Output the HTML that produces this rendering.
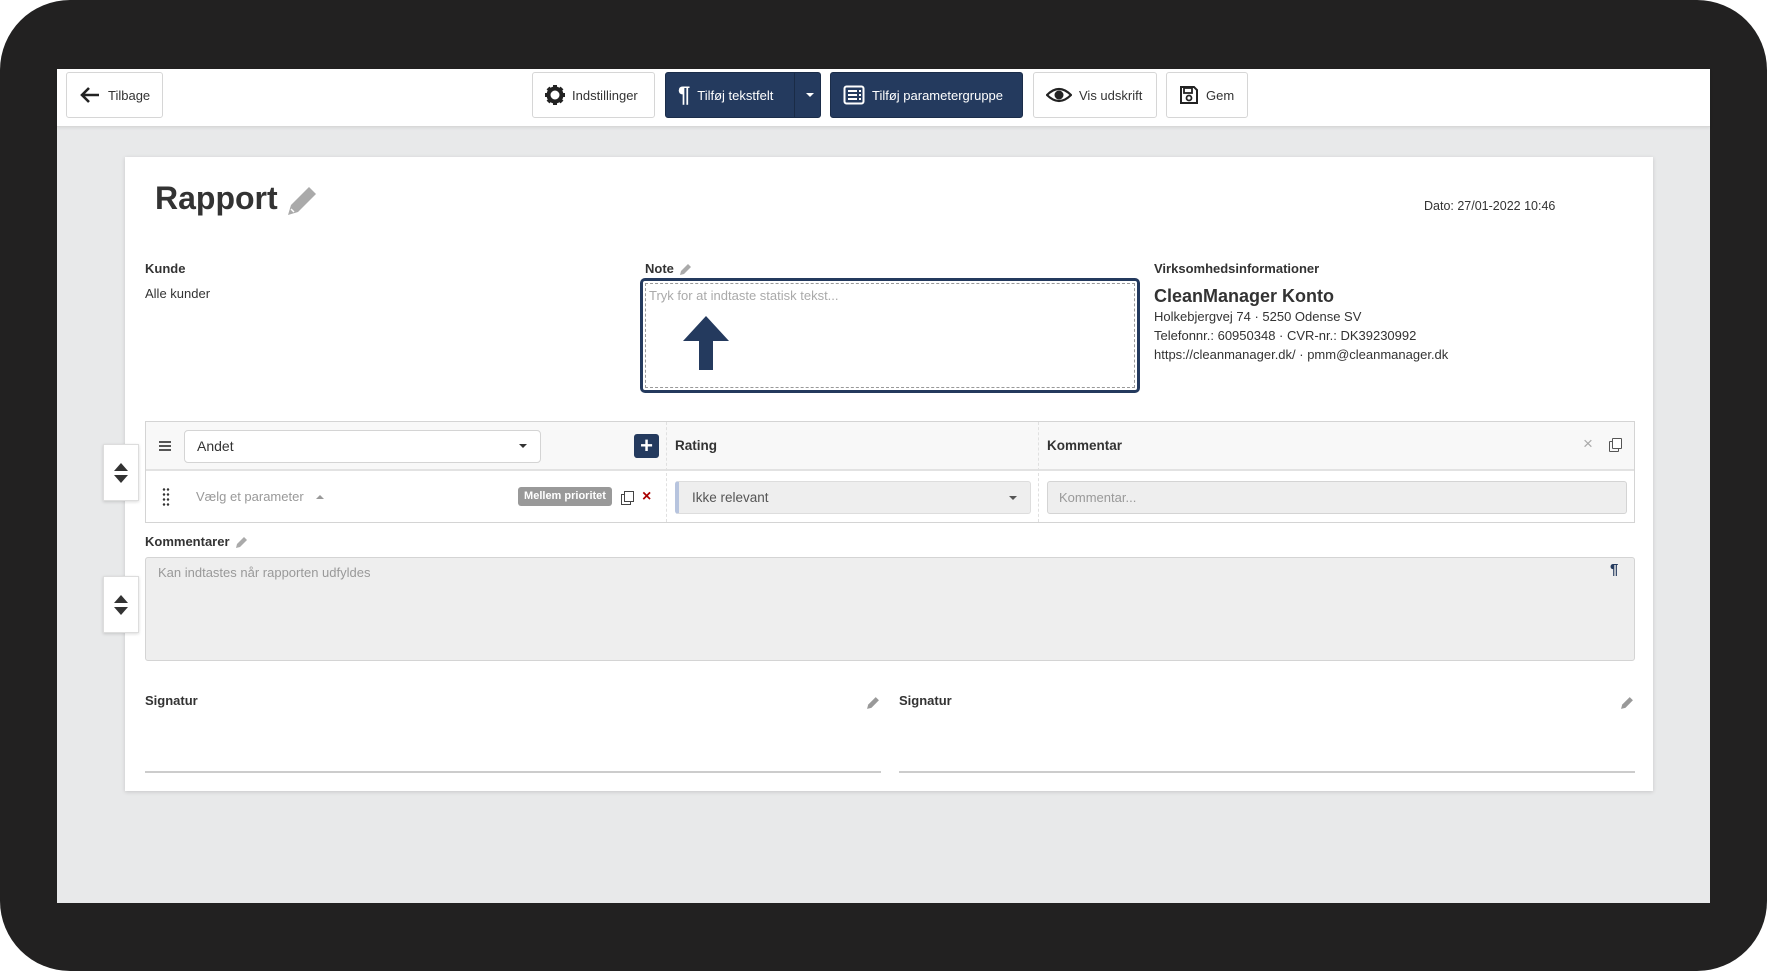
<!DOCTYPE html>
<html><head><meta charset="utf-8"><style>
*{box-sizing:border-box;margin:0;padding:0}
body{width:1767px;height:971px;background:#fff;font-family:"Liberation Sans",sans-serif;color:#333;position:relative;overflow:hidden}
.frame{position:absolute;left:0;top:0;width:1767px;height:971px;background:#222121;border-radius:70px}
.screen{position:absolute;left:57px;top:69px;width:1653px;height:834px;background:#e8e9ea}
.tb{position:absolute;left:57px;top:69px;width:1653px;height:58px;background:#fff;border-bottom:1px solid #d8d8d8;box-shadow:0 1px 3px rgba(0,0,0,.08)}
.a{position:absolute}
.btn{position:absolute;top:72px;height:46px;border:1px solid #d6d6d6;border-radius:3px;background:#fff;font-size:13px;display:flex;align-items:center;padding-left:12px;gap:7px;color:#333}
.btn.dk{background:#243a5e;border-color:#1b2d4a;color:#fff}
.card{position:absolute;left:125px;top:157px;width:1528px;height:634px;background:#fff;box-shadow:0 1px 4px rgba(0,0,0,.15)}
.lbl{position:absolute;font-size:13px;font-weight:bold;color:#333}
.t{position:absolute;font-size:13px;color:#333}
.handle{position:absolute;left:103px;width:36px;height:57px;background:#fff;border:1px solid #ddd;box-shadow:0 1px 3px rgba(0,0,0,.15);display:flex;align-items:center;justify-content:center}
</style></head><body>
<div class="frame"></div>
<div class="screen"></div>
<div class="tb"></div>

<div class="btn" style="left:66px;width:97px"><svg width="22" height="18" viewBox="0 0 22 18"><path d="M10 2 L3 9 L10 16 M3 9 H20" stroke="#222" stroke-width="2.6" fill="none"/></svg>Tilbage</div>
<div class="btn" style="left:532px;width:123px"><svg width="20" height="20" viewBox="0 0 20 20"><circle cx="10" cy="10" r="6.5" fill="none" stroke="#222" stroke-width="4"/><g stroke="#222" stroke-width="4"><path d="M10 0v4M10 16v4M0 10h4M16 10h4M3 3l3 3M14 14l3 3M17 3l-3 3M6 14l-3 3"/></g><circle cx="10" cy="10" r="2.3" fill="#fff"/></svg>Indstillinger</div>
<div class="btn dk" style="left:665px;width:156px"><span style="font-size:22px;font-weight:bold;line-height:1">¶</span>Tilføj tekstfelt<span style="position:absolute;left:128px;top:0;width:1px;height:44px;background:#1a2b46"></span><span style="position:absolute;left:140px;top:20px;border-left:4px solid transparent;border-right:4px solid transparent;border-top:4px solid #fff"></span></div>
<div class="btn dk" style="left:830px;width:193px"><svg width="22" height="20" viewBox="0 0 22 20"><rect x="1.5" y="1.5" width="19" height="17" rx="2" fill="none" stroke="#fff" stroke-width="2"/><path d="M5 6h9M5 10h9M5 14h9M16 6h2M16 10h2M16 14h2" stroke="#fff" stroke-width="2"/></svg>Tilføj parametergruppe</div>
<div class="btn" style="left:1033px;width:124px"><svg width="26" height="18" viewBox="0 0 26 18"><path d="M1 9 Q13 -3 25 9 Q13 21 1 9Z" fill="none" stroke="#222" stroke-width="2.2"/><circle cx="13" cy="9" r="4.5" fill="#222"/></svg>Vis udskrift</div>
<div class="btn" style="left:1166px;width:82px"><svg width="20" height="20" viewBox="0 0 20 20"><path d="M2 2h13l3 3v13H2z" fill="none" stroke="#222" stroke-width="2"/><rect x="5" y="3" width="8" height="5" fill="none" stroke="#222" stroke-width="1.8"/><circle cx="10" cy="13" r="2.5" fill="none" stroke="#222" stroke-width="1.8"/></svg>Gem</div>

<div class="card"></div>
<div class="a" style="left:155px;top:180px;font-size:32px;font-weight:bold;color:#333">Rapport</div>
<svg class="a" style="left:284px;top:183px" width="36" height="36" viewBox="0 0 36 36"><path d="M4 32 L7 22 L25 4 L32 11 L14 29Z" fill="#aaa"/><path d="M7 26 L10 29" stroke="#fff" stroke-width="1.5"/></svg>
<div class="t" style="left:1424px;top:199px;font-size:12.5px">Dato: 27/01-2022 10:46</div>

<div class="lbl" style="left:145px;top:261px">Kunde</div>
<div class="t" style="left:145px;top:286px">Alle kunder</div>

<div class="lbl" style="left:645px;top:261px">Note</div>
<svg class="a" style="left:679px;top:263px" width="13" height="13" viewBox="0 0 13 13"><path d="M1 12 L2 8 L9 1 L12 4 L5 11Z" fill="#aaa"/></svg>
<div class="a" style="left:640px;top:278px;width:500px;height:115px;border:3px solid #243a5e;border-radius:5px"><div style="position:absolute;inset:2px;border:1px dashed #999"></div></div>
<div class="t" style="left:649px;top:288px;color:#aaa">Tryk for at indtaste statisk tekst...</div>
<svg class="a" style="left:681px;top:315px" width="50" height="56" viewBox="0 0 50 56"><path d="M25 1 L48 26 H32 V55 H18 V26 H2Z" fill="#243a5e"/></svg>

<div class="lbl" style="left:1154px;top:261px">Virksomhedsinformationer</div>
<div class="a" style="left:1154px;top:286px;font-size:18px;font-weight:bold;color:#333">CleanManager Konto</div>
<div class="t" style="left:1154px;top:309px">Holkebjergvej 74 · 5250 Odense SV</div>
<div class="t" style="left:1154px;top:328px">Telefonnr.: 60950348 · CVR-nr.: DK39230992</div>
<div class="t" style="left:1154px;top:347px">https://cleanmanager.dk/ · pmm@cleanmanager.dk</div>

<div class="a" style="left:145px;top:421px;width:1490px;height:102px;border:1px solid #d4d4d4;background:#fff"></div>
<div class="a" style="left:146px;top:422px;width:1488px;height:49px;background:#f8f8f8;border-bottom:2px solid #e2e2e2"></div>
<div class="a" style="left:666px;top:422px;width:0;height:100px;border-left:1px dashed #e0e0e0"></div>
<div class="a" style="left:1038px;top:422px;width:0;height:100px;border-left:1px dashed #e0e0e0"></div>
<div class="a" style="left:159px;top:441px;width:12px;height:10px;border-top:2px solid #555;border-bottom:2px solid #555"><div style="margin-top:2px;height:2px;background:#555"></div></div>
<div class="a" style="left:184px;top:430px;width:357px;height:33px;background:#fff;border:1px solid #d4d4d4;border-radius:4px"></div>
<div class="t" style="left:197px;top:438px;font-size:14px">Andet</div>
<div class="a" style="left:519px;top:444px;border-left:4px solid transparent;border-right:4px solid transparent;border-top:4px solid #333"></div>
<div class="a" style="left:634px;top:434px;width:25px;height:24px;background:#243a5e;border-radius:3px;color:#fff;font-size:22px;font-weight:bold;text-align:center;line-height:23px">+</div>
<div class="lbl" style="left:675px;top:438px;font-size:13.5px">Rating</div>
<div class="lbl" style="left:1047px;top:438px;font-size:13.5px">Kommentar</div>
<div class="a" style="left:1583px;top:434px;color:#aaa;font-size:17px">×</div>
<div class="a" style="left:1609px;top:441px;width:10px;height:11px;border:1.5px solid #555;border-radius:1px"></div>
<div class="a" style="left:1612px;top:438px;width:10px;height:11px;border:1.5px solid #555;border-radius:1px;background:#fff"></div>

<div class="a" style="left:162px;top:487px;width:8px;height:20px;background:radial-gradient(circle,#333 1.1px,transparent 1.4px) 0 0/4px 5px"></div>
<div class="t" style="left:196px;top:489px;color:#999">Vælg et parameter</div>
<div class="a" style="left:316px;top:495px;border-left:4px solid transparent;border-right:4px solid transparent;border-bottom:4px solid #999"></div>
<div class="a" style="left:518px;top:487px;width:94px;height:19px;background:#999;border-radius:3px;color:#fff;font-size:11px;font-weight:bold;text-align:center;line-height:19px">Mellem prioritet</div>
<div class="a" style="left:621px;top:494px;width:10px;height:11px;border:1.5px solid #444"></div>
<div class="a" style="left:624px;top:491px;width:10px;height:11px;border:1.5px solid #444;background:#fff"></div>
<div class="a" style="left:642px;top:488px;color:#a00;font-weight:bold;font-size:16px">×</div>
<div class="a" style="left:675px;top:481px;width:356px;height:33px;background:#eee;border:1px solid #ddd;border-left:4px solid #b7c4de;border-radius:3px"></div>
<div class="t" style="left:692px;top:490px;color:#555;font-size:13.5px">Ikke relevant</div>
<div class="a" style="left:1009px;top:496px;border-left:4px solid transparent;border-right:4px solid transparent;border-top:4px solid #555"></div>
<div class="a" style="left:1047px;top:481px;width:580px;height:33px;background:#eee;border:1px solid #d4d4d4;border-radius:3px"></div>
<div class="t" style="left:1059px;top:490px;color:#999">Kommentar...</div>

<div class="handle" style="top:444px"><svg width="16" height="22" viewBox="0 0 16 22"><path d="M1 9 L8 1 L15 9Z M1 13 L8 21 L15 13Z" fill="#333"/></svg></div>
<div class="handle" style="top:576px"><svg width="16" height="22" viewBox="0 0 16 22"><path d="M1 9 L8 1 L15 9Z M1 13 L8 21 L15 13Z" fill="#333"/></svg></div>

<div class="lbl" style="left:145px;top:534px">Kommentarer</div>
<svg class="a" style="left:235px;top:536px" width="13" height="13" viewBox="0 0 13 13"><path d="M1 12 L2 8 L9 1 L12 4 L5 11Z" fill="#aaa"/></svg>
<div class="a" style="left:145px;top:557px;width:1490px;height:104px;background:#eee;border:1px solid #d4d4d4;border-radius:3px"></div>
<div class="t" style="left:158px;top:565px;color:#999">Kan indtastes når rapporten udfyldes</div>
<div class="a" style="left:1610px;top:561px;color:#243a5e;font-weight:bold;font-size:15px">¶</div>

<div class="lbl" style="left:145px;top:693px">Signatur</div>
<div class="lbl" style="left:899px;top:693px">Signatur</div>
<svg class="a" style="left:866px;top:696px" width="14" height="14" viewBox="0 0 13 13"><path d="M1 12 L2 8 L9 1 L12 4 L5 11Z" fill="#999"/></svg>
<svg class="a" style="left:1620px;top:696px" width="14" height="14" viewBox="0 0 13 13"><path d="M1 12 L2 8 L9 1 L12 4 L5 11Z" fill="#999"/></svg>
<div class="a" style="left:145px;top:771px;width:736px;height:2px;background:#ccc"></div>
<div class="a" style="left:899px;top:771px;width:736px;height:2px;background:#ccc"></div>
</body></html>
